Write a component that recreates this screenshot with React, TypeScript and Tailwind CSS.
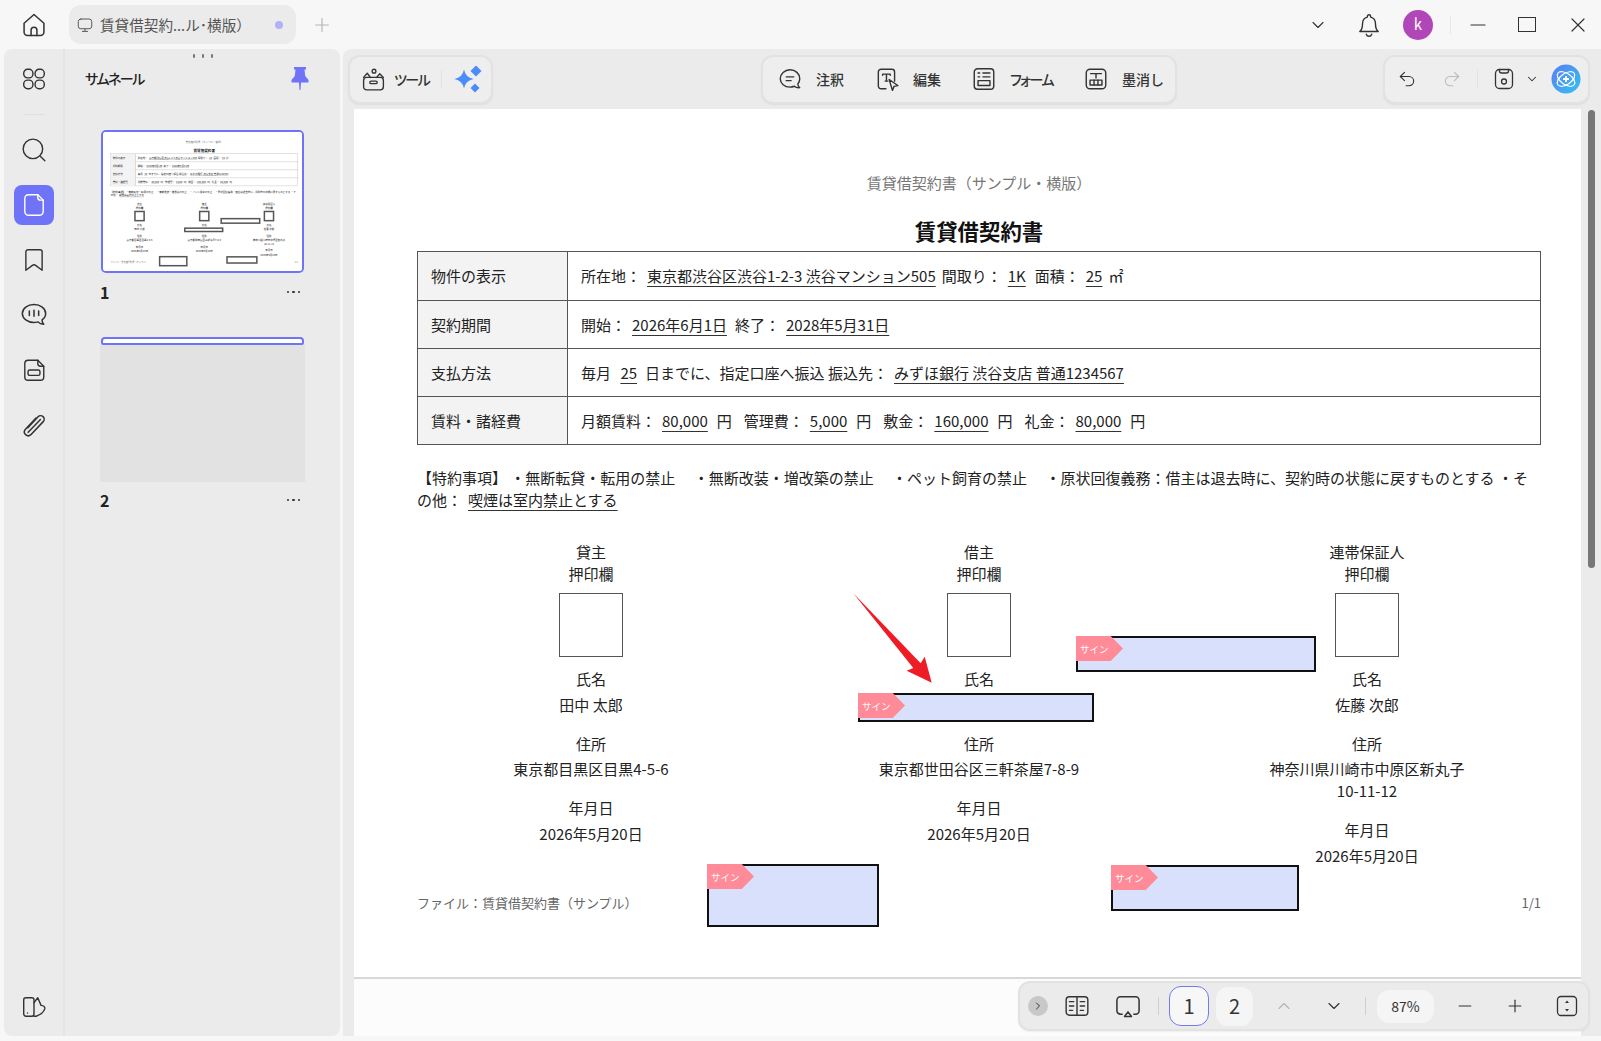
import { ChevronDown, ChevronRight, ChevronUp, Minus, Plus, Redo2, Undo2, X } from "lucide-react";
import type { ReactNode } from "react";

const font = "font-['Noto_Sans_CJK_JP','Noto_Sans',sans-serif]";
const pill = "flex h-[49px] items-center rounded-xl border-2 border-[#e2e2e2] bg-[#eeeeee] shadow-[0_1px_2px_rgba(0,0,0,0.06)]";
const kana = "[font-feature-settings:'palt'] tracking-[-1.5px]";

function Ic({ size = 24, className = "", children }: { size?: number; className?: string; children: ReactNode }) {
  return (
    <svg width={size} height={size} viewBox="0 0 24 24" fill="none" stroke="currentColor" strokeWidth="1.3" strokeLinecap="round" strokeLinejoin="round" className={`shrink-0 ${className}`}>
      {children}
    </svg>
  );
}

function U({ className = "mr-[9px]", children }: { className?: string; children: ReactNode }) {
  return <span className={`ml-[6px] underline decoration-[#333] decoration-1 underline-offset-[4px] [text-decoration-skip-ink:none] ${className}`}>{children}</span>;
}

function Gap() {
  return <span className="inline-block w-[12px]" />;
}

const rows: { head: string; body: ReactNode }[] = [
  { head: "物件の表示", body: <>所在地：<U className="mr-[6px]">東京都渋谷区渋谷1-2-3 渋谷マンション505</U>間取り：<U>1K</U>面積：<U className="mr-[6px]">25</U>㎡</> },
  { head: "契約期間", body: <>開始：<U className="mr-[8px]">2026年6月1日</U>終了：<U>2028年5月31日</U></> },
  { head: "支払方法", body: <>毎月 <U className="mr-[8px]">25</U>日までに、指定口座へ振込 振込先：<U>みずほ銀行 渋谷支店 普通1234567</U></> },
  { head: "賃料・諸経費", body: <>月額賃料：<U>80,000</U>円<Gap />管理費：<U>5,000</U>円<Gap />敷金：<U>160,000</U>円<Gap />礼金：<U>80,000</U>円</> },
];

const signers = [
  { role: "貸主", name: "田中 太郎", address: "東京都目黒区目黒4-5-6" },
  { role: "借主", name: "\u00a0", address: "東京都世田谷区三軒茶屋7-8-9" },
  { role: "連帯保証人", name: "佐藤 次郎", address: "神奈川県川崎市中原区新丸子10-11-12" },
];

function Sign({ thumb, className }: { thumb: boolean; className: string }) {
  if (thumb) return <div className={`absolute border-[9px] border-[#555] bg-white ${className}`} />;
  return (
    <div className={`absolute border-2 border-[#111] bg-[#d9e0fc] ${className}`}>
      <div className="absolute -left-[2px] -top-[2px] flex h-[25px] w-[47px] items-center bg-[#ff8b98] pl-[4px] text-[9.5px] text-white [clip-path:polygon(0_0,74%_0,100%_50%,74%_100%,0_100%)]">
        サイン
      </div>
    </div>
  );
}

function Doc({ thumb = false }: { thumb?: boolean }) {
  return (
    <div className="relative h-[868px] w-[1227px] bg-white pl-[63px] pr-[40px] pt-[63px] text-[15px] leading-[22px] text-[#222]">
      <div className="text-center text-[#777]">賃貸借契約書（サンプル・横版）</div>
      <h1 className="mb-[5px] mt-[22px] text-center text-[21.4px] font-bold leading-[30px] text-[#111]">賃貸借契約書</h1>
      <div className="border border-[#555]">
        {rows.map((row, i) => (
          <div key={row.head} className={`flex h-[48px] items-center ${i > 0 ? "border-t border-[#555]" : ""}`}>
            <div className="flex h-full w-[150px] shrink-0 items-center border-r border-[#555] bg-[#f3f3f3] pl-[13px]">{row.head}</div>
            <div className="whitespace-pre-wrap pl-[13px]">{row.body}</div>
          </div>
        ))}
      </div>
      <div className="mt-[22px] whitespace-pre">
        <p>【特約事項】 ・無断転貸・転用の禁止　 ・無断改装・増改築の禁止　 ・ペット飼育の禁止　 ・原状回復義務：借主は退去時に、契約時の状態に戻すものとする ・そ</p>
        <p>の他：<U>喫煙は室内禁止とする</U></p>
      </div>
      <div className="mt-[30px] grid grid-cols-3 gap-x-[40px]">
        {signers.map((s) => (
          <div key={s.role} className="flex flex-col items-center text-center">
            <div>{s.role}</div>
            <div>押印欄</div>
            <div className={`mb-[11px] mt-[8px] h-[64px] w-[64px] bg-white ${thumb ? "border-[9px] border-[#555]" : "border border-[#555]"}`} />
            <div>氏名</div>
            <div className="mt-[4px]">{s.name}</div>
            <div className="mt-[17px]">住所</div>
            <div className="mt-[3px] w-[205px]">{s.address}</div>
            <div className="mt-[17px]">年月日</div>
            <div className="mt-[4px]">2026年5月20日</div>
          </div>
        ))}
      </div>
      <div className="mt-[26px] flex justify-between text-[13px] leading-[20px] text-[#666]">
        <span>ファイル：賃貸借契約書（サンプル）</span>
        <span>1/1</span>
      </div>
      <Sign thumb={thumb} className="left-[504px] top-[584px] h-[29px] w-[236px]" />
      <Sign thumb={thumb} className="left-[722px] top-[527px] h-[36px] w-[240px]" />
      <Sign thumb={thumb} className="left-[353px] top-[755px] h-[63px] w-[172px]" />
      <Sign thumb={thumb} className="left-[757px] top-[756px] h-[46px] w-[188px]" />
      {!thumb && (
        <svg width="90" height="96" viewBox="0 0 90 96" className="absolute left-[494px] top-[480px]">
          <polygon points="5.3,4.3 72.7,74.3 76.7,67.7 83.7,93.7 58.7,81.7 65.3,79" fill="#ee1c25" />
        </svg>
      )}
    </div>
  );
}

function NavSlot({ active = false, children }: { active?: boolean; children: ReactNode }) {
  return <div className={`flex h-[40px] w-[40px] items-center justify-center rounded-lg ${active ? "bg-[#6f73f7] text-white" : "text-[#333]"}`}>{children}</div>;
}

function PageMenu({ label }: { label: string }) {
  return (
    <div className="flex h-[20px] items-center justify-between">
      <span className="-ml-px text-[16px] font-bold text-[#222]">{label}</span>
      <span className="mr-[4px] flex gap-[3px]">
        <i className="h-[2.5px] w-[2.5px] rounded-full bg-[#333]" />
        <i className="h-[2.5px] w-[2.5px] rounded-full bg-[#333]" />
        <i className="h-[2.5px] w-[2.5px] rounded-full bg-[#333]" />
      </span>
    </div>
  );
}

function Sidebar() {
  return (
    <aside className="mb-[5px] ml-[4px] flex w-[336px] shrink-0 overflow-hidden rounded-lg bg-[#ebebeb]">
      <nav className="flex w-[61px] shrink-0 flex-col items-center border-r-2 border-[#e4e4e4] pb-[16px] pt-[10px]">
        <NavSlot>
          <Ic size={26}>
            <rect x="2.5" y="3" width="8.5" height="8" rx="3.6" />
            <rect x="13" y="3" width="8.5" height="8" rx="3.6" />
            <rect x="2.5" y="13" width="8.5" height="8" rx="3.6" />
            <rect x="13" y="13" width="8.5" height="8" rx="3.6" />
          </Ic>
        </NavSlot>
        <div className="mb-[15px] mt-[15px] h-px w-[22px] bg-[#e0e0e0]" />
        <div className="flex flex-col gap-[15px]">
          <NavSlot>
            <Ic size={26}>
              <circle cx="11" cy="11" r="9" />
              <path d="m18 18 4 4" />
            </Ic>
          </NavSlot>
          <NavSlot active>
            <Ic size={26} className="text-white">
              <path d="M7 2.500h8.500l5 5V18a3.500 3.500 0 0 1-3.500 3.500H7A3.500 3.500 0 0 1 3.500 18V6A3.500 3.500 0 0 1 7 2.500Z" />
              <path d="M15.500 2.500V5a2.500 2.500 0 0 0 2.500 2.500h2.500" />
            </Ic>
          </NavSlot>
          <NavSlot>
            <Ic size={26}>
              <path d="M6.500 2.500h11a2 2 0 0 1 2 2v17l-6-4.500a2.500 2.500 0 0 0-3 0l-6 4.500v-17a2 2 0 0 1 2-2Z" />
            </Ic>
          </NavSlot>
          <NavSlot>
            <Ic size={28}>
              <path d="M12 3C6.500 3 2 6.400 2 10.700s4.500 7.700 10 7.700c1.200 0 2.300-.2 3.400-.5.900 1.100 2.600 2 5 2-1-.9-1.500-2.100-1.500-3.700 1.900-1.400 3.100-3.300 3.100-5.500C22 6.400 17.500 3 12 3Z" />
              <path d="M8 8.500v4M12 8v5M16 8.500v4" />
            </Ic>
          </NavSlot>
          <NavSlot>
            <Ic size={26}>
              <path d="M6.500 3h9l5.500 5.500v10a3 3 0 0 1-3 3h-11.500a3 3 0 0 1-3-3V6a3 3 0 0 1 3-3Z" />
              <path d="M15.500 3v3a2.500 2.500 0 0 0 2.500 2.500h3" />
              <rect x="6.500" y="12" width="11" height="5" rx="1.500" />
            </Ic>
          </NavSlot>
          <NavSlot>
            <Ic size={28}>
              <path d="M6.800 14.300 15.500 5a3 3 0 0 1 4.400 4.100L9.300 20.300a3.300 3.300 0 0 1-4.800-4.500L13.700 6" />
              <path d="M7 18.300 17.500 7.300" />
            </Ic>
          </NavSlot>
        </div>
        <div className="mt-auto text-[#333]">
          <Ic size={26}>
            <rect x="2.500" y="3.500" width="9.500" height="17" rx="2" />
            <path d="M12 8 15.500 3.500l3 7c2.500.3 3.800 1.300 3.500 3-1 3.300-3.500 5.500-8 7h-2" />
            <path d="M6 17.500h.01" />
          </Ic>
        </div>
      </nav>
      <div className="flex min-w-0 flex-1 flex-col pt-[5px]">
        <div className="flex justify-center gap-[7px]">
          <i className="h-[4px] w-[2px] rounded-full bg-[#777]" />
          <i className="h-[4px] w-[2px] rounded-full bg-[#777]" />
          <i className="h-[4px] w-[2px] rounded-full bg-[#777]" />
        </div>
        <div className="flex h-[40px] items-center justify-between pl-[20px] pr-[31px]">
          <span className={`text-[14px] font-medium text-[#222] ${kana}`}>サムネール</span>
          <svg width="18" height="24" viewBox="0 0 18 24" fill="#6f73f7">
            <path d="M3 1h12v2.500h-1.500l.7 6.500L17.500 14v2.500h-7.500L9.500 24h-1L8 16.500H.5V14l3.300-4 .7-6.500H3Z" />
          </svg>
        </div>
        <div className="ml-[36px] mt-[32px] w-[203px]">
          <div className="h-[143px] overflow-hidden rounded-[5px] border-2 border-[#6f73f7] bg-white">
            <div className="-ml-[3px] -mt-[2px] w-[1227px] origin-top-left scale-[0.1668]">
              <Doc thumb />
            </div>
          </div>
          <div className="mt-[9px]">
            <PageMenu label="1" />
          </div>
          <div className="mt-[35px]">
            <div className="h-[8px] rounded-b-[2px] rounded-t-[4px] border-2 border-[#6f73f7] bg-white" />
            <div className="-mx-px h-[137px] bg-[#e2e2e2]" />
          </div>
          <div className="mt-[8px]">
            <PageMenu label="2" />
          </div>
        </div>
      </div>
    </aside>
  );
}

function TitleBar() {
  return (
    <header className="flex h-[49px] shrink-0 items-center pl-[20px] pr-[11px] text-[#333]">
      <Ic size={28}>
        <path d="M3.500 10.500 12 3l8.500 7.500V18a3 3 0 0 1-3 3h-11a3 3 0 0 1-3-3Z" />
        <path d="M9.500 21v-4.500a2.500 2.500 0 0 1 5 0V21" />
      </Ic>
      <div className="ml-[21px] flex h-[39px] w-[227px] items-center rounded-xl bg-[#ebebeb] pl-[7px] pr-[13px]">
        <Ic size={18} className="text-[#555]">
          <rect x="3" y="4" width="18" height="13" rx="3.500" />
          <path d="M12 17v3M8.500 20.500h7" />
        </Ic>
        <span className="ml-[6px] text-[14.6px] text-[#555]">賃貸借契約...ル･横版）</span>
        <i className="ml-auto h-[8px] w-[8px] rounded-full bg-[#b4b0f5]" />
      </div>
      <Plus size={22} strokeWidth={1.2} className="ml-[15px] text-[#b5b5b5]" />
      <ChevronDown size={20} strokeWidth={1.3} className="ml-auto" />
      <Ic size={26} className="ml-[28px]">
        <path d="M12 2.500a1.500 1.500 0 0 1 1.500 1.500v.7c3 .7 4.500 3.200 4.500 6.300 0 3.500.8 5.500 2.500 7H3.500c1.700-1.500 2.500-3.500 2.500-7 0-3.100 1.500-5.600 4.500-6.300V4A1.500 1.500 0 0 1 12 2.500Z" />
        <path d="M9.500 20.500a2.600 2.600 0 0 0 5 0" />
      </Ic>
      <div className="ml-[21px] flex h-[30px] w-[30px] items-center justify-center rounded-full bg-[#b146b8] text-[15px] text-white">k</div>
      <div className="ml-[17px] h-[18px] w-px bg-[#e8e8e8]" />
      <Minus size={24} strokeWidth={1.2} className="ml-[15px]" />
      <div className="ml-[28px] h-[15px] w-[18px] border-[1.5px] border-[#333]" />
      <X size={24} strokeWidth={1.2} className="ml-[30px]" />
    </header>
  );
}

function Toolbar() {
  return (
    <div className="grid h-[60px] shrink-0 grid-cols-[1fr_auto_1fr] items-center pl-[5px] pr-[11px] text-[#333]">
      <div className={`${pill} justify-self-start pl-[11px] pr-[9px]`}>
        <Ic size={25}>
          <rect x="2.500" y="10" width="19" height="12" rx="3" />
          <rect x="8.500" y="13.500" width="7" height="2.500" rx="1.200" />
          <path d="M2.500 10 6 6l3 4M15 10l3-3.500 3.500 3.500" />
          <circle cx="12.500" cy="4" r="1.800" />
        </Ic>
        <span className={`ml-[8px] text-[14px] font-medium ${kana}`}>ツール</span>
        <div className="ml-[12px] h-[18px] w-px bg-[#e2e2e2]" />
        <svg width="28" height="28" viewBox="0 0 28 28" fill="#4a8df8" className="ml-[12px]">
          <path d="M10 4.500Q11.500 12.500 19.500 14 11.500 15.500 10 23.500 8.500 15.500 .5 14 8.500 12.500 10 4.500Z" />
          <path d="m22 .5 5.500 5.500-5.500 5.500-5.500-5.500Z" />
          <path d="m21 18.500 4.500 4.500-4.500 4.500-4.500-4.500Z" />
        </svg>
      </div>

      <div className={`${pill} gap-x-[13px] pl-[14px] pr-[11px] text-[14px] font-medium`}>
        <Ic size={26}>
          <path d="M12 3.500c5 0 9 3.600 9 8.300 0 1.900-.7 3.500-1.800 4.800.1 1.300.6 2.400 1.800 3.400-2.200.2-3.900-.3-5-1.300-1.200.5-2.600.8-4 .8-5 0-9-3.400-9-7.700s4-8.300 9-8.300Z" />
          <path d="M8.500 10h7M8.500 13.500h4.500" />
        </Ic>
        <span>注釈</span>
        <Ic size={26} className="ml-[17px]">
          <path d="M19 14V5.500a2.500 2.500 0 0 0-2.500-2.500h-10A2.500 2.500 0 0 0 4 5.500v13A2.500 2.500 0 0 0 6.500 21H11" />
          <path d="M8 8.500V7.500h7v1M11.500 7.500v6.500M10.300 14h2.400" />
          <path d="m14 12.500 8 5.500-3.500.8-1.500 3.700Z" />
        </Ic>
        <span>編集</span>
        <Ic size={26} className="ml-[17px]">
          <rect x="3" y="2.500" width="18" height="19" rx="3" />
          <path d="M6.500 6.500h1.500M11 6.500h6.500M6.500 10h1.500M11 10h6.500" />
          <rect x="6.500" y="13.500" width="11" height="4.500" />
        </Ic>
        <span className={kana}>フォーム</span>
        <Ic size={26} className="ml-[17px]">
          <rect x="3" y="3" width="18" height="18" rx="3.500" />
          <path d="M7 7h10M12 7v4" />
          <rect x="6.500" y="13" width="11" height="4.500" />
          <path d="M10.200 13v4.500M13.800 13v4.500" />
        </Ic>
        <span>墨消し</span>
      </div>

      <div className={`${pill} justify-self-end pl-[12px] pr-[7px]`}>
        <Undo2 size={20} strokeWidth={1.3} />
        <Redo2 size={20} strokeWidth={1.3} className="ml-[25px] text-[#bbb]" />
        <div className="ml-[15px] h-[18px] w-px bg-[#e2e2e2]" />
        <Ic size={24} className="ml-[14px]">
          <rect x="3.500" y="2.500" width="17" height="19" rx="4" />
          <path d="M7.500 2.500v1.500a2 2 0 0 0 2 2h5a2 2 0 0 0 2-2V2.500" />
          <circle cx="12" cy="14.500" r="2.500" />
        </Ic>
        <ChevronDown size={14} strokeWidth={1.8} className="ml-[9px]" />
        <svg width="30" height="30" viewBox="0 0 30 30" fill="none" className="ml-[12px]">
          <defs>
            <linearGradient id="ai" x1="0" y1="0" x2="1" y2="1">
              <stop offset="0" stopColor="#5a7bf5" />
              <stop offset="1" stopColor="#33c3f0" />
            </linearGradient>
          </defs>
          <circle cx="15" cy="15" r="14.500" fill="url(#ai)" />
          <g stroke="#fff" strokeWidth="1.200">
            <ellipse cx="15" cy="15" rx="10" ry="5.500" transform="rotate(35 15 15)" />
            <ellipse cx="15" cy="15" rx="10" ry="5.500" transform="rotate(-35 15 15)" />
          </g>
          <path d="M15 12v6M12 15h6" stroke="#fff" strokeWidth="1.800" />
        </svg>
      </div>
    </div>
  );
}

function BottomBar() {
  return (
    <div className="absolute bottom-[5px] right-[11px] flex h-[50px] items-center rounded-xl border-2 border-[#e2e2e2] bg-[#ebebeb] pr-[9px] text-[#333] shadow-[0_1px_2px_rgba(0,0,0,0.06)]">
      <div className="ml-[8px] flex h-[20px] w-[20px] items-center justify-center rounded-full bg-[#c8c8c8]">
        <ChevronRight size={12} strokeWidth={2} />
      </div>
      <Ic size={26} className="ml-[16px]">
        <rect x="2" y="3.500" width="20" height="17" rx="3" />
        <path d="M12 3.500v17M5 8h4M5 12h4M5 16h3M15 8h4M15 12h4M15 16h3" />
      </Ic>
      <Ic size={28} className="ml-[24px]">
        <path d="M7 19H5.500A3 3 0 0 1 2.500 16V7a3 3 0 0 1 3-3h13a3 3 0 0 1 3 3v9a3 3 0 0 1-3 3H17" />
        <path d="m12 17 3 4H9Z" />
      </Ic>
      <div className="ml-[16px] h-[18px] w-px bg-[#cfcfcf]" />
      <div className="ml-[10px] flex h-[40px] w-[40px] items-center justify-center rounded-xl border border-[#7579ee] bg-[#f7f7f7] text-[20px]">1</div>
      <div className="ml-[7px] flex h-[39px] w-[37px] items-center justify-center rounded-xl bg-[#f5f5f5] text-[20px]">2</div>
      <ChevronUp size={20} strokeWidth={1.4} className="ml-[21px] text-[#b5b5b5]" />
      <ChevronDown size={20} strokeWidth={1.4} className="ml-[30px]" />
      <div className="ml-[21px] h-[18px] w-px bg-[#cfcfcf]" />
      <div className="ml-[11px] flex h-[33px] w-[57px] items-center justify-center rounded-xl bg-[#f5f5f5] text-[14px]">87%</div>
      <Minus size={20} strokeWidth={1.4} className="ml-[21px]" />
      <Plus size={20} strokeWidth={1.4} className="ml-[30px]" />
      <Ic size={24} className="ml-[30px]">
        <rect x="2.500" y="2.500" width="19" height="19" rx="3.500" />
        <path d="m12 6.500 2 2.500h-4Zm0 11-2-2.500h4Z" fill="currentColor" stroke="none" />
      </Ic>
    </div>
  );
}

export default function App() {
  return (
    <div className={`flex h-[1041px] w-full flex-col overflow-hidden bg-[#f7f7f7] ${font}`}>
      <TitleBar />
      <div className="flex min-h-0 flex-1">
        <Sidebar />
        <main className="relative mb-[5px] ml-[3px] flex min-w-0 flex-1 flex-col rounded-tl-lg bg-[#ebebeb]">
          <Toolbar />
          <div className="flex min-h-0 flex-1 pl-[11px]">
            <div className="h-[868px] w-[1227px] shrink-0 overflow-hidden">
              <Doc />
            </div>
            <div className="flex flex-1 justify-center pl-px pt-[1px]">
              <div className="h-[458px] w-[7px] rounded-full bg-[#777]" />
            </div>
          </div>
          <div className="ml-[11px] mr-[20px] h-[59px] shrink-0 border-t-2 border-[#d8d8d8] bg-[#fcfcfc]" />
          <BottomBar />
        </main>
      </div>
    </div>
  );
}
